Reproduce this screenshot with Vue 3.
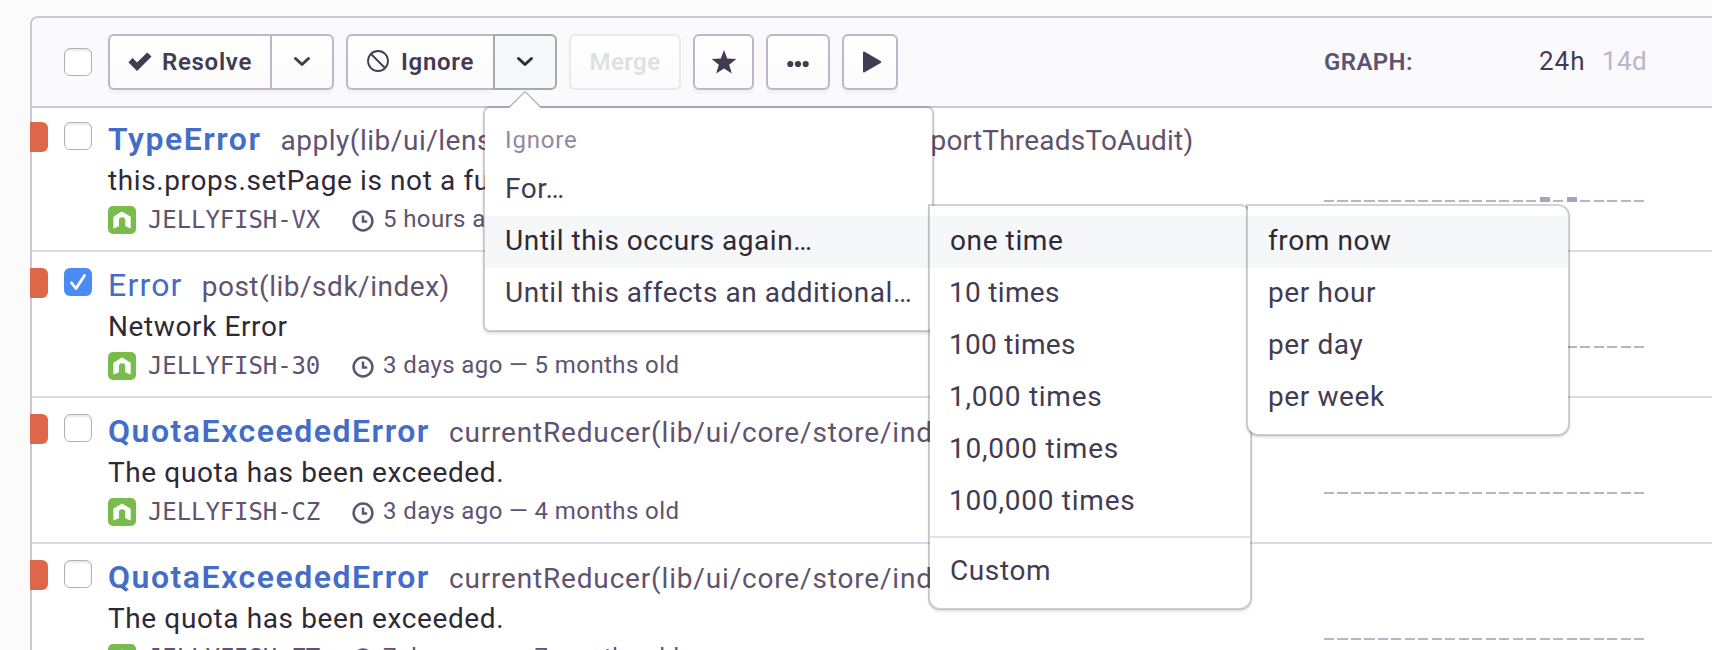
<script setup>
const issues = [
  { type: 'TypeError', lead: 'apply(lib/ui/lens', tail: 'portThreadsToAudit)', message: 'this.props.setPage is not a function', id: 'JELLYFISH-VX', time: '5 hours ago — 2 months old', unread: true, checked: false, peaks: [16, 18] },
  { type: 'Error', lead: 'post(lib/sdk/index)', message: 'Network Error', id: 'JELLYFISH-30', time: '3 days ago — 5 months old', unread: false, checked: true, peaks: [] },
  { type: 'QuotaExceededError', lead: 'currentReducer(lib/ui/core/store/index)', wide: true, message: 'The quota has been exceeded.', id: 'JELLYFISH-CZ', time: '3 days ago — 4 months old', unread: true, checked: false, peaks: [] },
  { type: 'QuotaExceededError', lead: 'currentReducer(lib/ui/core/store/index)', wide: true, message: 'The quota has been exceeded.', id: 'JELLYFISH-ZT', time: '7 days ago — 7 months old', unread: true, checked: false, peaks: [] },
]
const counts = ['10 times', '100 times', '1,000 times', '10,000 times', '100,000 times']
const windows = ['per hour', 'per day', 'per week']
</script>

<template>
  <div class="page">
    <div class="panel">
      <header class="toolbar">
        <span class="checkbox"></span>
        <div class="group resolve">
          <button class="btn main">
            <svg class="i-check" width="24" height="20" viewBox="0 0 24 20"><path d="M0.4 10.2 4.6 6 9 10.4 19.2.4 23.5 4.6 9 19.1Z" /></svg>
            <span>Resolve</span>
          </button>
          <button class="btn caret">
            <svg width="18" height="12" viewBox="0 0 18 12"><path class="stroke" d="M2.5 2.5 9 8.5 15.5 2.5" /></svg>
          </button>
        </div>
        <div class="group ignore">
          <button class="btn main">
            <svg class="i-ban" width="24" height="24" viewBox="0 0 24 24"><circle cx="12" cy="12" r="10" /><path d="M5 5 19 19" /></svg>
            <span>Ignore</span>
          </button>
          <div class="anchor">
            <button class="btn caret open">
              <svg width="18" height="12" viewBox="0 0 18 12"><path class="stroke" d="M2.5 2.5 9 8.5 15.5 2.5" /></svg>
            </button>
            <div class="menu root">
              <svg class="arrow" width="36" height="20" viewBox="0 0 36 20"><path d="M2 18 18 1.5 34 18V20H2Z" fill="#fff" /><path d="M1.5 18 18 1.5 34.5 18" fill="none" stroke="#b4b1ba" stroke-width="1.2" /></svg>
              <div class="menu-title">Ignore</div>
              <div class="item">For…</div>
              <div class="item active">
                <span>Until this occurs again…</span>
                <div class="menu sub counts">
                  <div class="item active">
                    <span>one time</span>
                    <div class="menu sub windows">
                      <div class="item active">from now</div>
                      <div v-for="w in windows" :key="w" class="item">{{ w }}</div>
                    </div>
                  </div>
                  <div v-for="c in counts" :key="c" class="item number" :class="{ large: c.includes(',') }">{{ c }}</div>
                  <div class="divider"></div>
                  <div class="item">Custom</div>
                </div>
              </div>
              <div class="item">Until this affects an additional…</div>
            </div>
          </div>
        </div>
        <button class="btn merge">Merge</button>
        <button class="btn star">
          <svg width="26" height="26" viewBox="0 0 26 26"><path d="M13 1 16.2 9.6 25.3 10 18.2 15.7 20.8 24.6 13 19.6 5.2 24.6 7.8 15.7.7 10 9.8 9.6Z" /></svg>
        </button>
        <button class="btn more">
          <svg width="22" height="8" viewBox="0 0 22 8"><circle cx="3.3" cy="4" r="3.1" /><circle cx="11" cy="4" r="3.1" /><circle cx="18.7" cy="4" r="3.1" /></svg>
        </button>
        <button class="btn play">
          <svg width="20" height="22" viewBox="0 0 20 22"><path d="M1 1.6Q1 0 2.6.7L18.6 10Q20 11 18.6 12L2.6 21.3Q1 22 1 20.4Z" /></svg>
        </button>
        <div class="graph-head">
          <span class="graph-label">GRAPH:</span>
          <span class="range">24h</span>
          <span class="range off">14d</span>
        </div>
      </header>

      <article v-for="(issue, n) in issues" :key="n" class="row">
        <span class="level"></span>
        <span class="checkbox" :class="{ checked: issue.checked }">
          <svg v-if="issue.checked" width="28" height="28" viewBox="0 0 28 28"><path class="tick" d="M7.5 14.8 12 20.5 20.5 7.5" /></svg>
        </span>
        <div class="body">
          <div class="heading">
            <span class="type" :class="{ unread: issue.unread }">{{ issue.type }}</span>
            <span class="culprit" :class="{ split: issue.tail, wide: issue.wide }">{{ issue.lead }}</span>
            <span v-if="issue.tail" class="culprit tail">{{ issue.tail }}</span>
          </div>
          <div class="message">{{ issue.message }}</div>
          <div class="meta">
            <svg class="platform" width="28" height="28" viewBox="0 0 28 28"><rect width="28" height="28" rx="5" fill="#7abc4b" /><path d="M5.4 10.8 14 5.6 22.7 10.8V22.6L17.3 20.3V14.3Q17.3 11.3 14.1 11.3 10.9 11.3 10.9 14.3V20.3L5.4 22.6Z" fill="#fff" /></svg>
            <span class="short-id">{{ issue.id }}</span>
            <svg class="clock" width="22" height="22" viewBox="0 0 22 22"><circle cx="11" cy="11" r="9.4" /><path d="M11 5.5V11.6H15.2" /></svg>
            <span class="time">{{ issue.time }}</span>
          </div>
        </div>
        <div class="chart">
          <i v-for="b in 24" :key="b" :class="{ peak: issue.peaks.includes(b - 1) }"></i>
        </div>
      </article>
    </div>
  </div>
</template>

<style>
body { margin: 0; overflow: hidden; }
</style>

<style scoped>
* { box-sizing: border-box; }
.page {
  height: 650px;
  padding: 16px 0 0 30px;
  overflow: hidden;
  background: #fbfbfb;
  font-family: Roboto, "Liberation Sans", sans-serif;
  color: #2f2936;
}
.panel {
  height: 700px;
  border: 2px solid #cdc6d6;
  border-right: 0;
  border-radius: 8px 0 0 0;
  background: #fff;
}
.toolbar {
  display: flex;
  align-items: center;
  height: 90px;
  padding-left: 32px;
  border-bottom: 2px solid #cdc6d6;
  border-radius: 6px 0 0 0;
  background: #fafafc;
}
.checkbox {
  flex: none;
  width: 28px;
  height: 28px;
  border: 1.5px solid #b3b3b3;
  border-radius: 6px;
  background: #fff;
  box-shadow: inset 0 2px 2px rgba(0, 0, 0, 0.09);
}
.checkbox.checked { border: 0; background: #4b8bf5; box-shadow: none; }
.checkbox svg { display: block; }
.tick { fill: none; stroke: #fff; stroke-width: 2.8; stroke-linecap: round; stroke-linejoin: round; }
.group { display: flex; }
.resolve { margin-left: 16px; }
.ignore { margin-left: 12px; }
.btn {
  display: flex;
  align-items: center;
  justify-content: center;
  flex: none;
  height: 56px;
  margin: 0;
  padding: 0;
  border: 2px solid #bfb6cb;
  border-radius: 6px;
  background: linear-gradient(#fff, #fbfbfc);
  box-shadow: 0 4px 0 rgba(47, 41, 54, 0.035);
  color: #433b52;
  fill: #433b52;
  font: 600 24px/28px Roboto, "Liberation Sans", sans-serif;
  letter-spacing: 0.7px;
}
.main { justify-content: flex-start; border-radius: 6px 0 0 6px; border-right: 0; }
.resolve .main { width: 162px; padding-left: 18px; gap: 10px; }
.ignore .main { width: 147px; padding-left: 18px; gap: 11px; }
.caret { width: 64px; border-radius: 0 6px 6px 0; }
.caret svg { margin-top: -1px; }
.stroke { fill: none; stroke: #433b52; stroke-width: 3; stroke-linecap: round; stroke-linejoin: round; }
.open { border-color: #a9a9aa; background: #f7f8fa; box-shadow: none; }
.open .stroke { stroke: #322b38; }
.i-ban { margin-top: -3px; fill: none; stroke: #433b52; stroke-width: 1.8; }
.merge { width: 112px; margin-left: 12px; border-color: #ebe9ee; color: #dfe0e4; box-shadow: none; letter-spacing: 0.4px; }
.star { width: 61px; margin-left: 12px; }
.more { width: 64px; margin-left: 12px; }
.more svg { margin-top: 3px; }
.play { width: 56px; margin-left: 12px; }
.play svg { margin-left: 3px; }
.graph-head { display: flex; align-items: baseline; width: 320px; margin-left: 426px; margin-top: -2px; }
.graph-label { width: 215px; color: #5f5371; font-size: 24px; font-weight: 600; letter-spacing: 0.4px; }
.range { width: 63px; color: #433b52; font-size: 26px; letter-spacing: 1px; }
.range.off { width: 42px; color: #bdb4c9; letter-spacing: 0.4px; }

.row { position: relative; display: flex; height: 146px; border-bottom: 2px solid #dfd9e6; }
.row:nth-of-type(1) { height: 144px; }
.row:nth-of-type(1) > * { margin-top: -2px; }
.level { width: 18px; height: 30px; margin-left: -2px; border-radius: 0 6px 6px 0; background: #de6649; transform: translateY(16px); }
.row > .checkbox { margin-left: 16px; transform: translateY(16px); }
.body { width: 1216px; margin-left: 16px; padding-top: 13px; white-space: nowrap; }
.heading { display: flex; align-items: baseline; height: 40px; line-height: 40px; }
.type { margin-right: 19px; color: #436dc8; font-size: 32px; letter-spacing: 1.2px; }
.type.unread { font-weight: 600; letter-spacing: 1.52px; }
.culprit { color: #5f5371; font-size: 28px; letter-spacing: 0.52px; }
.culprit.split { width: 651px; }
.culprit.wide { letter-spacing: 0.83px; }
.culprit.tail { margin-left: -1px; letter-spacing: 0.2px; }
.message { margin-top: 2px; height: 40px; line-height: 40px; font-size: 28px; letter-spacing: 0.61px; }
.meta { display: flex; height: 28px; margin-top: 5px; color: #5f5371; }
.platform { flex: none; }
.short-id { width: 174px; margin: 0 30px 0 12px; font: 24px/28px "DejaVu Sans Mono", monospace; letter-spacing: -0.1px; }
.clock { flex: none; margin-top: 4px; fill: none; stroke: #5f5371; stroke-width: 2.5; }
.time { margin-left: 9px; font-size: 24px; line-height: 26px; letter-spacing: 0.4px; }
.chart { display: flex; align-items: flex-end; gap: 3.45px; width: 320px; height: 96px; }
.chart i { flex: 1; height: 2px; background: #bab2c5; }
.chart i.peak { height: 5px; background: #aba1b9; }

.anchor { position: relative; }
.menu { position: absolute; z-index: 2; border: 2px solid rgba(60, 50, 75, 0.22); background: #fff; background-clip: padding-box; box-shadow: 0 2px 3px rgba(47, 41, 54, 0.13); }
.menu.root { left: -10px; top: 72px; width: 451px; padding-bottom: 10px; border-radius: 7px; }
.arrow { position: absolute; left: 22px; top: -18px; }
.menu-title { height: 56px; padding: 2px 0 0 20px; color: #91899e; font-size: 24px; line-height: 60px; letter-spacing: 0.85px; }
.item { position: relative; height: 52px; padding-left: 20px; color: #433b52; font-size: 28px; line-height: 49px; letter-spacing: 0.52px; white-space: nowrap; }
.item.active { background: #f6f7f9; color: #2f2936; }
.item.number { letter-spacing: 0.2px; }
.item.large { letter-spacing: 0.7px; }
.sub { top: -12px; width: 324px; padding: 10px 0; border-color: rgba(60, 60, 70, 0.23); border-radius: 0 12px 12px 12px; box-shadow: 0 2px 2px rgba(47, 41, 54, 0.11); }
.counts { left: 443px; }
.windows { left: 316px; }
.sub .item { letter-spacing: 0.6px; }
.sub .item.number { padding-left: 19px; letter-spacing: 0.3px; }
.sub .item.large { letter-spacing: 0.75px; }
.divider { height: 2px; margin: 8px 0; background: #e1e0e3; }
</style>
